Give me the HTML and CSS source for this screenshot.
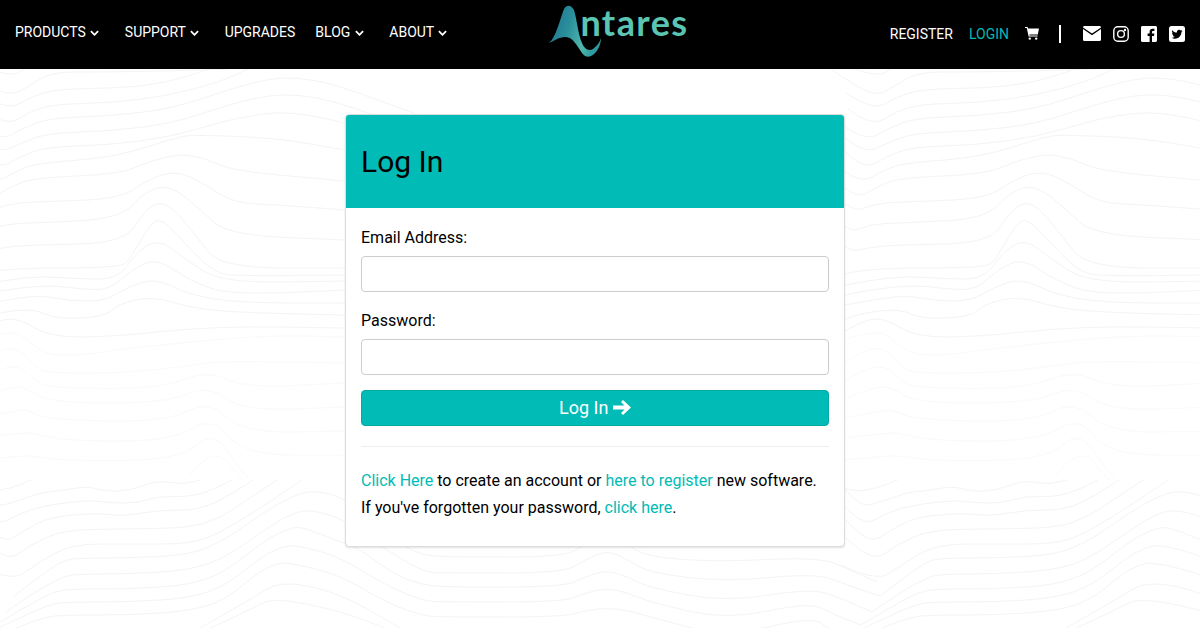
FILE: index.html
```html
<!DOCTYPE html>
<html lang="en">
<head>
  <meta charset="UTF-8" />
  <meta name="viewport" content="width=device-width, initial-scale=1" />
  <title>Antares - Log In</title>
  <link rel="stylesheet" href="styles.css">
</head>
<body>

<header class="topbar">
  <nav class="main-nav">
    <a href="#" class="nav-item">PRODUCTS <svg class="chev" viewBox="0 0 10 6"><polyline points="1,1 5,5 9,1" /></svg></a>
    <a href="#" class="nav-item">SUPPORT <svg class="chev" viewBox="0 0 10 6"><polyline points="1,1 5,5 9,1" /></svg></a>
    <a href="#" class="nav-item nav-plain">UPGRADES</a>
    <a href="#" class="nav-item">BLOG <svg class="chev" viewBox="0 0 10 6"><polyline points="1,1 5,5 9,1" /></svg></a>
    <a href="#" class="nav-item">ABOUT <svg class="chev" viewBox="0 0 10 6"><polyline points="1,1 5,5 9,1" /></svg></a>
  </nav>

  <a href="#" class="logo">
    <svg class="logo-mark" viewBox="0 0 54 69">
      <defs>
        <linearGradient id="swoosh" x1="0" y1="0" x2="1" y2="0.3">
          <stop offset="0" stop-color="#1d6f8c" />
          <stop offset="0.45" stop-color="#2a8f9c" />
          <stop offset="0.8" stop-color="#4fb8ac" />
          <stop offset="1" stop-color="#2f9aa0" />
        </linearGradient>
      </defs>
      <path fill="url(#swoosh)" d="M0 43C7 38 12 16 15 9C18 4 22 5 25 10C28 20 29 34 33 43C36 50 40 51 44 49C48 46 51 42 52 38C52 46 47 54 42 56C36 59 33 53 29 47C25 41 22 37 16 37C10 37 5 41 0 43Z" />
    </svg>
    <span class="logo-text">ntares</span>
  </a>

  <div class="right-nav">
    <a href="#" class="nav-item">REGISTER</a>
    <a href="#" class="nav-item nav-active">LOGIN</a>
    <a href="#" class="icon-link cart">
      <svg width="14" height="13" viewBox="0 0 14 13"><path fill="#fff" d="M0 0h2.600l.5 1.400H14l-1.200 6H4.300l.3 1.200h8v1H3.600L1.800 1H0z" /><circle cx="4.800" cy="11.600" r="1.200" fill="#fff" /><circle cx="11.200" cy="11.600" r="1.200" fill="#fff" /></svg>
    </a>
    <span class="divider"></span>
    <a href="#" class="icon-link">
      <svg width="18" height="15" viewBox="0 0 18 15"><path fill="#fff" d="M1.400 0h15.200c.8 0 1.400.6 1.400 1.400L9 7.600 0 1.400C0 .6.600 0 1.400 0zM0 3l9 6.200L18 3v10.500c0 .8-.6 1.500-1.400 1.500H1.400C.6 15 0 14.300 0 13.500z" /></svg>
    </a>
    <a href="#" class="icon-link">
      <svg width="16" height="16" viewBox="0 0 16 16" fill="none" stroke="#fff" stroke-width="1.400"><rect x="0.800" y="0.800" width="14.400" height="14.400" rx="4" /><circle cx="8" cy="8" r="3.400" /><circle cx="12" cy="4" r="0.500" fill="#fff" /></svg>
    </a>
    <a href="#" class="icon-link">
      <svg width="16" height="16" viewBox="0 0 16 16"><path fill="#fff" d="M1.500 0h13c.8 0 1.500.7 1.500 1.500v13c0 .8-.7 1.500-1.500 1.500H11v-6h2l.3-2.400H11V6.100c0-.7.200-1.200 1.200-1.200h1.200V2.800c-.2 0-.9-.1-1.800-.1-1.800 0-3 1.100-3 3.100v1.800h-2V10h2v6H1.500C.7 16 0 15.300 0 14.500v-13C0 .7.700 0 1.500 0z" /></svg>
    </a>
    <a href="#" class="icon-link">
      <svg width="16" height="16" viewBox="0 0 16 16"><rect width="16" height="16" rx="2.500" fill="#fff" /><g transform="translate(2.500 2.800) scale(0.46)"><path fill="#000" d="M23.953 4.57a10 10 0 01-2.825.775 4.958 4.958 0 002.163-2.723c-.951.555-2.005.959-3.127 1.184a4.92 4.920 0 00-8.384 4.482C7.690 8.095 4.067 6.130 1.640 3.162a4.822 4.822 0 00-.666 2.475c0 1.710.870 3.213 2.188 4.096a4.904 4.904 0 01-2.228-.616v.060a4.923 4.923 0 003.946 4.827 4.996 4.996 0 01-2.212.085 4.936 4.936 0 004.604 3.417 9.867 9.867 0 01-6.102 2.105c-.390 0-.779-.023-1.170-.067a13.995 13.995 0 007.557 2.209c9.053 0 13.998-7.496 13.998-13.985 0-.210 0-.420-.015-.630A9.935 9.935 0 0024 4.590z" /></g></svg>
    </a>
  </div>
</header>

<main class="page">
  <svg class="wave-bg" id="waveBg" width="1200" height="559" viewBox="0 0 1200 559"></svg>

  <section class="login-card">
    <div class="card-head">
      <h1>Log In</h1>
    </div>
    <form class="card-body">
      <label for="email">Email Address:</label>
      <input type="text" id="email" />
      <label for="password">Password:</label>
      <input type="password" id="password" />
      <button type="button" class="btn-login">Log In <svg width="18" height="15" viewBox="0 0 18 15"><path fill="#fff" d="M0 5.500h11.500L8 2l2-2 8 7.500L10 15l-2-2 3.500-3.500H0z" /></svg></button>
      <hr />
      <p>
        <a href="#">Click Here</a> to create an account or <a href="#">here to register</a> new software.<br />
        If you've forgotten your password, <a href="#">click here</a>.
      </p>
    </form>
  </section>
</main>

<script src="waves.js"></script>
</body>
</html>
```
FILE: styles.css
```css
* { box-sizing: border-box; }
html, body { height: 100%; }
body {
  margin: 0;
  font-family: 'Roboto', 'Liberation Sans', sans-serif;
  background: #fff;
  color: #000;
  overflow: hidden;
}
a { text-decoration: none; }

.topbar {
  display: flex;
  align-items: flex-start;
  height: 69px;
  background: #000;
  padding: 0 15px;
}
.main-nav {
  display: flex;
  padding-top: 24px;
}
.nav-item {
  color: #fff;
  font-size: 14px;
  line-height: 16px;
  white-space: nowrap;
}
.main-nav .nav-item { margin-right: 25.5px; }
.main-nav .nav-plain { margin-right: 20px; }
.main-nav .nav-item:last-child { margin-right: 0; }
.chev {
  width: 9px;
  height: 6px;
  margin-left: 1px;
  vertical-align: 1px;
  fill: none;
  stroke: #fff;
  stroke-width: 2;
}

.logo {
  display: flex;
  margin-left: 102px;
  height: 69px;
}
.logo-mark {
  width: 54px;
  height: 69px;
  overflow: visible;
}
.logo-text {
  margin-left: -23px;
  padding-top: 2px;
  font-family: 'Lato', sans-serif;
  font-weight: 700;
  font-size: 36px;
  letter-spacing: 1.4px;
  line-height: 40px;
  color: #5cc4b3;
}

.right-nav {
  display: flex;
  align-items: center;
  margin-left: auto;
  height: 67px;
}
.right-nav .nav-item { margin-right: 16px; }
.right-nav .nav-active { color: #00bbb6; }
.icon-link {
  display: flex;
  margin-right: 12px;
}
.cart { margin-right: 20px; }
.divider {
  width: 2px;
  height: 18px;
  background: #fff;
  margin-right: 22px;
}
.icon-link:last-child { margin-right: 0; }

.page {
  position: relative;
  height: 559px;
  padding-top: 45px;
}
.wave-bg {
  position: absolute;
  top: 0;
  left: 0;
}
.wave-bg path {
  fill: none;
  stroke: #f4f4f4;
  stroke-width: 1;
}
.wave-bg path.faint { stroke: #fafafa; }

.login-card {
  position: relative;
  width: 500px;
  margin-left: 345px;
  background: #fff;
  border: 1px solid #ddd;
  border-radius: 4px;
  box-shadow: 0 1px 2px rgba(0, 0, 0, 0.12);
}
.card-head {
  background: #00bbb6;
  height: 93px;
  padding: 0 15px;
  display: flex;
  align-items: center;
  border-radius: 3px 3px 0 0;
}
.card-head h1 {
  margin: 0;
  font-size: 30px;
  font-weight: 400;
}
.card-body {
  padding: 20px 15px 25px;
}
.card-body label {
  display: block;
  font-size: 16px;
  line-height: 20px;
  margin-bottom: 8px;
}
.card-body input {
  display: block;
  width: 100%;
  height: 36px;
  margin-bottom: 19px;
  border: 1px solid #ccc;
  border-radius: 4px;
  background: #fff;
}
.btn-login {
  display: block;
  width: 100%;
  height: 36px;
  margin-top: -4px;
  padding: 0 0 2px;
  background: #00bbb6;
  border: 1px solid #00aaa5;
  border-radius: 4px;
  color: #fff;
  font-family: inherit;
  font-size: 18px;
}
.btn-login svg { vertical-align: -1px; }
.card-body hr {
  border: 0;
  border-top: 1px solid #eee;
  margin: 20px 0 20px;
}
.card-body p {
  margin: 0;
  font-size: 16px;
  line-height: 27px;
}
.card-body p a { color: #00bbb6; }
```
FILE: waves.js
```js
// wave lines behind the card, point lists traced by eye
const tileW = 866;

// upper sheet, page y 69 to 480
const upper = [
  [[-25,-5],[10,9],[28,-2]],
  [[-35,0],[-15,14],[11,28],[33,14],[53,3],[100,3],[170,2],[230,0]],
  [[-20,24],[7,42],[30,28],[57,20],[120,19],[167,14],[213,-1]],
  [[-18,40],[6,58],[30,42],[57,35],[110,34],[167,27],[220,13],[250,-1]],
  [[-25,55],[-1,73],[25,58],[50,49],[110,47],[170,40],[225,22],[255,13],[283,8],[315,11],[345,19],[430,50]],
  [[-25,65],[-3,86],[25,72],[50,64],[110,62],[170,55],[225,37],[255,29],[283,25],[315,28],[345,36],[400,55]],
  [[-25,78],[-4,101],[20,88],[45,78],[110,76],[170,68],[225,52],[250,47],[277,43],[310,46],[345,54],[400,70]],
  [[-30,95],[-8,116],[20,100],[40,94],[117,88],[180,67],[200,66],[277,69],[345,81]],
  [[-32,108],[-11,131],[10,118],[33,109],[120,105],[150,92],[180,85],[205,89],[233,102],[345,112]],
  [[-35,120],[-16,144],[8,135],[33,133],[120,130],[145,112],[175,101],[205,115],[233,134],[280,136],[345,141]],
  [[-40,135],[-21,165],[5,155],[33,154],[120,150],[145,122],[170,116],[200,140],[227,166],[345,171]],
  [[-40,155],[-21,184],[5,178],[33,176],[125,174],[145,140],[166,131],[195,165],[220,199],[345,199]],
  [[-21,205],[0,199],[120,199],[130,190],[150,155],[162,149],[190,180],[215,204],[240,207],[345,206]],
  [[-21,216],[0,212],[40,207],[80,210],[118,210],[135,185],[158,169],[185,190],[222,214],[345,212]],
  [[-21,226],[0,221],[50,216],[80,220],[110,221],[132,200],[157,189],[190,212],[230,226],[345,221]],
  [[-21,236],[0,232],[40,226],[70,232],[105,232],[128,218],[155,209],[190,226],[240,234],[345,234]],
  [[-21,250],[0,243],[35,240],[55,250],[105,248],[118,235],[153,227],[195,240],[253,244],[345,246]],
  [[-21,262],[0,250],[20,250],[50,268],[110,268],[215,257],[345,259]]
];

// the same sheet fades out further down
const upperFaint = [
  [[-21,270],[0,264],[20,264],[33,277],[50,286],[83,286],[130,279],[262,266],[345,268]],
  [[-21,294],[0,279],[20,280],[35,298],[47,304],[127,304],[187,297],[220,292],[345,294]],
  [[-21,312],[0,299],[20,297],[35,312],[50,319],[160,320],[207,301],[245,319],[345,314]],
  [[-21,329],[9,318],[25,318],[50,334],[167,334],[208,316],[243,342],[345,338]],
  [[-21,349],[19,341],[27,341],[50,351],[167,353],[208,331],[243,364],[345,362]],
  [[-21,369],[22,364],[33,364],[67,372],[173,372],[212,347],[243,386],[345,386]],
  [[-21,391],[19,387],[33,387],[67,392],[180,391],[213,361],[240,400],[250,411]],
  [[190,406],[213,376],[243,411]]
];

// lower sheet, page y 480 down
const lower = [
  [[-40,2],[-16,12],[10,9],[36,-2]],
  [[-30,-4],[-9,29],[20,20],[43,12],[60,11],[87,6],[103,11],[130,11],[157,0],[183,5],[207,-2]],
  [[-25,22],[-4,47],[20,33],[47,25],[90,20],[110,23],[137,23],[160,16],[190,17],[215,9],[235,-2]],
  [[-20,40],[2,65],[25,50],[50,37],[95,33],[125,36],[160,30],[200,30],[230,15],[256,-2]],
  [[-20,58],[6,83],[30,65],[63,50],[120,49],[190,48],[220,38],[250,18],[280,-2]],
  [[-25,85],[11,102],[35,85],[70,64],[130,64],[193,64],[225,50],[265,25],[305,-2]],
  [[14,116],[35,100],[60,82],[75,78],[130,78],[190,75],[225,60],[270,28],[300,13],[317,11],[345,18],[380,48],[405,67],[423,75],[445,77],[563,77],[585,65],[607,50],[630,67],[650,77],[717,82],[820,77],[850,90],[877,102]],
  [[6,132],[30,115],[60,98],[75,94],[130,94],[190,90],[225,78],[270,46],[295,32],[313,30],[345,40],[382,67],[423,92],[445,93],[563,93],[585,80],[607,70],[628,80],[650,93],[726,102],[816,93],[850,106],[880,116]],
  [[-5,145],[25,127],[55,111],[75,109],[130,109],[190,105],[225,92],[265,60],[290,48],[303,47],[340,62],[357,67],[395,95],[423,105],[445,107],[563,107],[585,97],[607,90],[628,97],[650,108],[726,122],[813,108],[845,120],[872,132]],
  [[-16,155],[15,140],[50,124],[70,122],[130,122],[190,118],[225,106],[260,78],[280,67],[297,65],[340,77],[385,105],[423,121],[445,122],[563,122],[585,113],[607,108],[628,113],[650,122],[726,140],[810,122],[835,135],[861,145]],
  [[-21,165],[10,150],[45,137],[65,135],[130,135],[190,131],[225,120],[255,95],[272,85],[287,82],[340,95],[385,122],[423,136],[445,137],[563,137],[587,130],[610,128],[630,131],[650,137],[726,157],[810,137],[830,148],[845,165]],
  [[200,148],[250,120],[280,100],[340,113],[400,148]],
  [[210,148],[250,130],[273,117],[340,131],[385,148]]
];

// smooth curve through the midpoints of a point list
function smoothPath(pts, dx) {
  let d = `M${pts[0][0] + dx} ${pts[0][1]}`;
  for (let i = 1; i < pts.length - 1; i++) {
    const mx = (pts[i][0] + pts[i + 1][0]) / 2 + dx;
    const my = (pts[i][1] + pts[i + 1][1]) / 2;
    d += ` Q${pts[i][0] + dx} ${pts[i][1]} ${mx} ${my}`;
  }
  const last = pts[pts.length - 1];
  return d + ` L${last[0] + dx} ${last[1]}`;
}

function addLines(sheet, lines, cls) {
  const ns = 'http://www.w3.org/2000/svg';
  lines.forEach(pts => {
    [0, tileW].forEach(dx => {
      const p = document.createElementNS(ns, 'path');
      p.setAttribute('d', smoothPath(pts, dx));
      if (cls) p.setAttribute('class', cls);
      sheet.appendChild(p);
    });
  });
}

function makeSheet(y, h) {
  const s = document.createElementNS('http://www.w3.org/2000/svg', 'svg');
  s.setAttribute('x', 0);
  s.setAttribute('y', y);
  s.setAttribute('width', 1200);
  s.setAttribute('height', h);
  document.getElementById('waveBg').appendChild(s);
  return s;
}

const top_ = makeSheet(0, 411);
addLines(top_, upper);
addLines(top_, upperFaint, 'faint');
addLines(makeSheet(411, 148), lower);
```
